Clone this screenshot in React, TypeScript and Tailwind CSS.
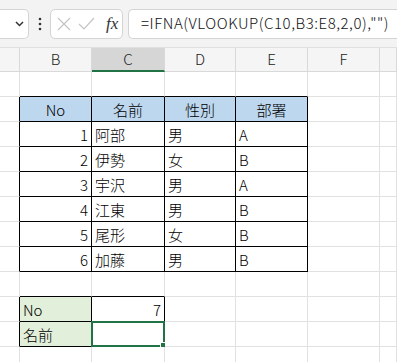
import { ReactNode } from 'react'

const colWidths = [20, 72, 73, 71, 72, 72, 17]
const colNames = ['', 'B', 'C', 'D', 'E', 'F', '']
const rowNums = [2, 3, 4, 5, 6, 7, 8, 9, 10, 11, 12, 13]

const people = [
  [1, '阿部', '男', 'A'],
  [2, '伊勢', '女', 'B'],
  [3, '宇沢', '男', 'A'],
  [4, '江東', '男', 'B'],
  [5, '尾形', '女', 'B'],
  [6, '加藤', '男', 'B'],
] as const

const font = { fontFamily: '"Noto Sans CJK JP", "Liberation Sans", sans-serif' }

// cells that carry black outlines
const inBox = (r: number, c: number) =>
  (r >= 3 && r <= 9 && c >= 1 && c <= 4) || (r >= 11 && r <= 12 && c >= 1 && c <= 2)

function cellContent(r: number, c: number): { text: ReactNode; align: string; bg: string } {
  let text: ReactNode = ''
  let align = 'justify-start pl-[3px]'
  let bg = 'bg-white'
  if (r === 3 && c >= 1 && c <= 4) {
    text = ['No', '名前', '性別', '部署'][c - 1]
    align = 'justify-center'
    bg = 'bg-[#bdd7ee]'
  } else if (r >= 4 && r <= 9 && c >= 1 && c <= 4) {
    const p = people[r - 4]
    text = p[c - 1]
    if (c === 1) align = 'justify-end pr-[3px]'
  } else if (r === 11 && c === 1) {
    text = 'No'
    bg = 'bg-[#e2efda]'
  } else if (r === 12 && c === 1) {
    text = '名前'
    bg = 'bg-[#e2efda]'
  } else if (r === 11 && c === 2) {
    text = '7'
    align = 'justify-end pr-[3px]'
  }
  return { text, align, bg }
}

function Toolbar() {
  return (
    <div className="h-[47px] bg-[#f3f3f3] flex items-center relative">
      <div className="h-[30px] w-[29px] bg-white border border-[#d4d4d4] rounded-r-[5px] border-l-0 flex items-center justify-end pr-[4px]">
        <svg width="9" height="6" viewBox="0 0 9 6">
          <path d="M1 1 L4.5 4.5 L8 1" stroke="#333" strokeWidth="1.5" fill="none" />
        </svg>
      </div>
      <div className="w-[21px] flex justify-center">
        <svg width="4" height="14" viewBox="0 0 4 14">
          <circle cx="2" cy="2" r="1.3" fill="#333" />
          <circle cx="2" cy="7" r="1.3" fill="#333" />
          <circle cx="2" cy="12" r="1.3" fill="#333" />
        </svg>
      </div>
      <div className="h-[30px] w-[73px] bg-white border border-[#d4d4d4] rounded-[5px] flex items-center pl-[6px] gap-[7px]">
        <svg width="14" height="14" viewBox="0 0 14 14">
          <path d="M1 1 L13 13 M13 1 L1 13" stroke="#c4c4c4" strokeWidth="1.2" fill="none" />
        </svg>
        <svg width="17" height="13" viewBox="0 0 17 13">
          <path d="M1 7 L6 12 L16 1" stroke="#c4c4c4" strokeWidth="1.2" fill="none" />
        </svg>
        <span
          className="text-[17px] italic text-[#333] leading-none ml-[4px]"
          style={{ fontFamily: '"Liberation Serif", serif' }}
        >
          fx
        </span>
      </div>
      <div className="ml-[5px] h-[30px] flex-1 bg-white border border-[#d4d4d4] border-r-0 rounded-l-[5px] flex items-center pl-[12px]">
        <span className="text-[15px] font-light text-[#111] whitespace-nowrap tracking-[0.55px]" style={font}>
          =IFNA(VLOOKUP(C10,B3:E8,2,0),"")
        </span>
      </div>
    </div>
  )
}

function ColumnHeader() {
  return (
    <div className="flex h-[25px] bg-[#f5f5f5] border-t border-[#e0e0e0]">
      {colWidths.map((w, c) => (
        <div
          key={c}
          style={{ width: w }}
          className={`shrink-0 h-full flex items-center justify-center text-[15px] font-light text-[#222] border-r border-[#d9d9d9] ${
            c === 2 ? 'bg-[#d6d6d6] border-b-2 border-b-[#217346]' : 'border-b border-b-[#d9d9d9]'
          }`}
        >
          <span style={font}>{colNames[c]}</span>
        </div>
      ))}
    </div>
  )
}

export default function App() {
  return (
    <div className="w-[397px] h-[362px] overflow-hidden bg-white" style={font}>
      <Toolbar />
      <ColumnHeader />
      {rowNums.map(r => (
        <div key={r} className="flex h-[25px]">
          {colWidths.map((w, c) => {
            const { text, align, bg } = cellContent(r, c)
            const rightBlack = inBox(r, c) || inBox(r, c + 1)
            const bottomBlack = inBox(r, c) || inBox(r + 1, c)
            const selected = r === 12 && c === 2
            return (
              <div
                key={c}
                style={{ width: w }}
                className={`shrink-0 h-full relative flex items-center text-[15px] font-light text-black border-r border-b ${bg} ${align} ${
                  rightBlack ? 'border-r-black' : 'border-r-[#e1e1e1]'
                } ${bottomBlack ? 'border-b-black' : 'border-b-[#e1e1e1]'}`}
              >
                <span className="leading-none">{text}</span>
                {selected && (
                  <>
                    <div className="absolute -left-px -top-px -right-px -bottom-px border-2 border-[#217346]" />
                    <div className="absolute -right-[3px] -bottom-[3px] w-[5px] h-[5px] bg-[#217346] border border-white box-content" />
                  </>
                )}
              </div>
            )
          })}
        </div>
      ))}
    </div>
  )
}
